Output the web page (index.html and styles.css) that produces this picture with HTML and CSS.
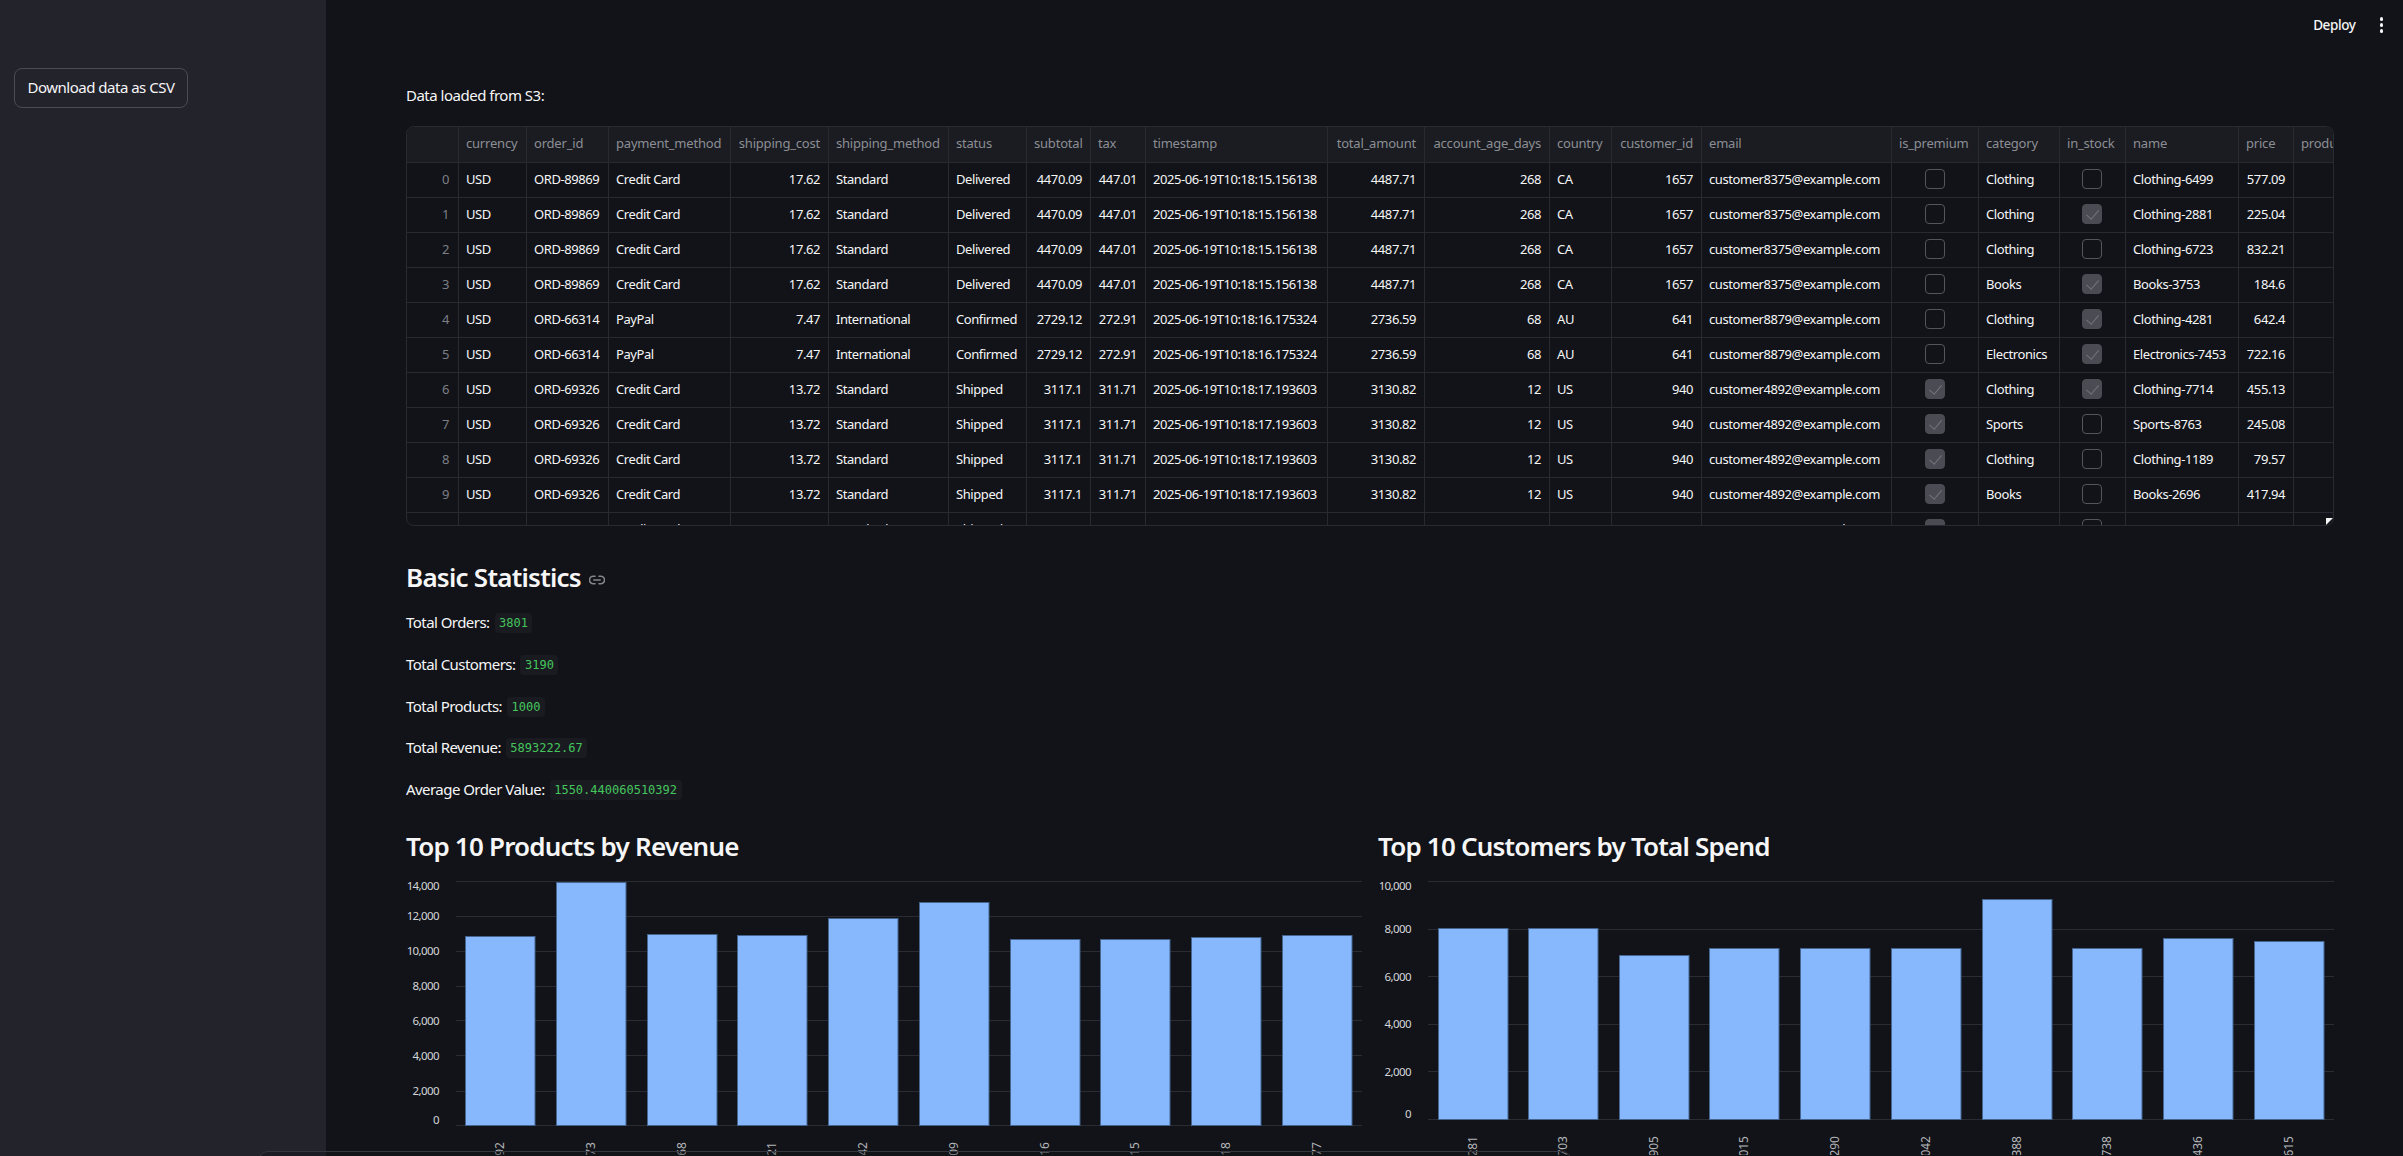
FILE: index.html
```html
<!DOCTYPE html>
<html lang="en">
<head>
  <meta charset="UTF-8" />
  <title>Data dashboard</title>
  <link rel="stylesheet" href="styles.css">
</head>
<body>
  <div class="app">
    <aside class="sidebar">
      <button class="download-btn">Download data as CSV</button>
    </aside>

    <main class="main">
      <div class="toolbar">
        <span class="deploy">Deploy</span>
        <span class="menu-dots"><i></i><i></i><i></i></span>
      </div>

      <p class="loaded">Data loaded from S3:</p>

      <div class="frame">
        <table class="grid">
          <colgroup>
            <col class="w52"><col class="w68"><col class="w82"><col class="w122"><col class="w98"><col class="w120"><col class="w78"><col class="w64"><col class="w55"><col class="w182"><col class="w97"><col class="w125"><col class="w62"><col class="w90"><col class="w190"><col class="w87"><col class="w81"><col class="w66"><col class="w113"><col class="w55"><col class="w120">
          </colgroup>
          <thead>
            <tr><th></th><th>currency</th><th>order_id</th><th>payment_method</th><th class="num">shipping_cost</th><th>shipping_method</th><th>status</th><th class="num">subtotal</th><th>tax</th><th>timestamp</th><th class="num">total_amount</th><th class="num">account_age_days</th><th>country</th><th class="num">customer_id</th><th>email</th><th>is_premium</th><th>category</th><th>in_stock</th><th>name</th><th>price</th><th>product_id</th></tr>
          </thead>
          <tbody>
            <tr><td class="idx">0</td><td>USD</td><td>ORD-89869</td><td>Credit Card</td><td class="num">17.62</td><td>Standard</td><td>Delivered</td><td class="num">4470.09</td><td class="num">447.01</td><td>2025-06-19T10:18:15.156138</td><td class="num">4487.71</td><td class="num">268</td><td>CA</td><td class="num">1657</td><td>customer8375@example.com</td><td><span class="box"></span></td><td>Clothing</td><td><span class="box"></span></td><td>Clothing-6499</td><td class="num">577.09</td><td></td></tr>
            <tr><td class="idx">1</td><td>USD</td><td>ORD-89869</td><td>Credit Card</td><td class="num">17.62</td><td>Standard</td><td>Delivered</td><td class="num">4470.09</td><td class="num">447.01</td><td>2025-06-19T10:18:15.156138</td><td class="num">4487.71</td><td class="num">268</td><td>CA</td><td class="num">1657</td><td>customer8375@example.com</td><td><span class="box"></span></td><td>Clothing</td><td><span class="box on"></span></td><td>Clothing-2881</td><td class="num">225.04</td><td></td></tr>
            <tr><td class="idx">2</td><td>USD</td><td>ORD-89869</td><td>Credit Card</td><td class="num">17.62</td><td>Standard</td><td>Delivered</td><td class="num">4470.09</td><td class="num">447.01</td><td>2025-06-19T10:18:15.156138</td><td class="num">4487.71</td><td class="num">268</td><td>CA</td><td class="num">1657</td><td>customer8375@example.com</td><td><span class="box"></span></td><td>Clothing</td><td><span class="box"></span></td><td>Clothing-6723</td><td class="num">832.21</td><td></td></tr>
            <tr><td class="idx">3</td><td>USD</td><td>ORD-89869</td><td>Credit Card</td><td class="num">17.62</td><td>Standard</td><td>Delivered</td><td class="num">4470.09</td><td class="num">447.01</td><td>2025-06-19T10:18:15.156138</td><td class="num">4487.71</td><td class="num">268</td><td>CA</td><td class="num">1657</td><td>customer8375@example.com</td><td><span class="box"></span></td><td>Books</td><td><span class="box on"></span></td><td>Books-3753</td><td class="num">184.6</td><td></td></tr>
            <tr><td class="idx">4</td><td>USD</td><td>ORD-66314</td><td>PayPal</td><td class="num">7.47</td><td>International</td><td>Confirmed</td><td class="num">2729.12</td><td class="num">272.91</td><td>2025-06-19T10:18:16.175324</td><td class="num">2736.59</td><td class="num">68</td><td>AU</td><td class="num">641</td><td>customer8879@example.com</td><td><span class="box"></span></td><td>Clothing</td><td><span class="box on"></span></td><td>Clothing-4281</td><td class="num">642.4</td><td></td></tr>
            <tr><td class="idx">5</td><td>USD</td><td>ORD-66314</td><td>PayPal</td><td class="num">7.47</td><td>International</td><td>Confirmed</td><td class="num">2729.12</td><td class="num">272.91</td><td>2025-06-19T10:18:16.175324</td><td class="num">2736.59</td><td class="num">68</td><td>AU</td><td class="num">641</td><td>customer8879@example.com</td><td><span class="box"></span></td><td>Electronics</td><td><span class="box on"></span></td><td>Electronics-7453</td><td class="num">722.16</td><td></td></tr>
            <tr><td class="idx">6</td><td>USD</td><td>ORD-69326</td><td>Credit Card</td><td class="num">13.72</td><td>Standard</td><td>Shipped</td><td class="num">3117.1</td><td class="num">311.71</td><td>2025-06-19T10:18:17.193603</td><td class="num">3130.82</td><td class="num">12</td><td>US</td><td class="num">940</td><td>customer4892@example.com</td><td><span class="box on"></span></td><td>Clothing</td><td><span class="box on"></span></td><td>Clothing-7714</td><td class="num">455.13</td><td></td></tr>
            <tr><td class="idx">7</td><td>USD</td><td>ORD-69326</td><td>Credit Card</td><td class="num">13.72</td><td>Standard</td><td>Shipped</td><td class="num">3117.1</td><td class="num">311.71</td><td>2025-06-19T10:18:17.193603</td><td class="num">3130.82</td><td class="num">12</td><td>US</td><td class="num">940</td><td>customer4892@example.com</td><td><span class="box on"></span></td><td>Sports</td><td><span class="box"></span></td><td>Sports-8763</td><td class="num">245.08</td><td></td></tr>
            <tr><td class="idx">8</td><td>USD</td><td>ORD-69326</td><td>Credit Card</td><td class="num">13.72</td><td>Standard</td><td>Shipped</td><td class="num">3117.1</td><td class="num">311.71</td><td>2025-06-19T10:18:17.193603</td><td class="num">3130.82</td><td class="num">12</td><td>US</td><td class="num">940</td><td>customer4892@example.com</td><td><span class="box on"></span></td><td>Clothing</td><td><span class="box"></span></td><td>Clothing-1189</td><td class="num">79.57</td><td></td></tr>
            <tr><td class="idx">9</td><td>USD</td><td>ORD-69326</td><td>Credit Card</td><td class="num">13.72</td><td>Standard</td><td>Shipped</td><td class="num">3117.1</td><td class="num">311.71</td><td>2025-06-19T10:18:17.193603</td><td class="num">3130.82</td><td class="num">12</td><td>US</td><td class="num">940</td><td>customer4892@example.com</td><td><span class="box on"></span></td><td>Books</td><td><span class="box"></span></td><td>Books-2696</td><td class="num">417.94</td><td></td></tr>
            <tr><td class="idx"></td><td>USD</td><td>ORD-44444</td><td>Credit Card</td><td></td><td>Standard</td><td>Shipped</td><td></td><td></td><td>2025-06-19T10:18:18.000000</td><td></td><td></td><td>US</td><td></td><td>customer1000@example.com</td><td><span class="box on"></span></td><td>Home</td><td><span class="box"></span></td><td>Home-1000</td><td></td><td></td></tr>
          </tbody>
        </table>
        <span class="resize-corner"></span>
      </div>

      <h3 class="section-title">Basic Statistics
        <svg class="anchor" width="16" height="10" viewBox="0 0 16 10" fill="none" stroke="#85868b" stroke-width="1.6" stroke-linecap="round"><path d="M6 1.2H4.3a3.8 3.8 0 0 0 0 7.6H6M10 1.2h1.7a3.8 3.8 0 0 1 0 7.6H10M4.8 5h6.4"/></svg>
      </h3>

      <div class="stats">
        <p>Total Orders: <code>3801</code></p>
        <p>Total Customers: <code>3190</code></p>
        <p>Total Products: <code>1000</code></p>
        <p>Total Revenue: <code>5893222.67</code></p>
        <p>Average Order Value: <code>1550.440060510392</code></p>
      </div>

      <div class="charts">
        <section>
          <h3 class="chart-title">Top 10 Products by Revenue</h3>
          <svg class="chart" width="956" height="281">
            <g class="gridlines">
              <line x1="50" x2="956" y1="7.5" y2="7.5"/><line x1="50" x2="956" y1="42.5" y2="42.5"/><line x1="50" x2="956" y1="77.5" y2="77.5"/><line x1="50" x2="956" y1="112.5" y2="112.5"/><line x1="50" x2="956" y1="146.5" y2="146.5"/><line x1="50" x2="956" y1="181.5" y2="181.5"/><line x1="50" x2="956" y1="217.5" y2="217.5"/><line x1="50" x2="956" y1="251.5" y2="251.5"/>
            </g>
            <g class="y-labels">
              <text x="33" y="16">14,000</text><text x="33" y="46">12,000</text><text x="33" y="81">10,000</text><text x="33" y="116">8,000</text><text x="33" y="151">6,000</text><text x="33" y="186">4,000</text><text x="33" y="221">2,000</text><text x="33" y="250">0</text>
            </g>
            <g class="bars">
              <rect x="59.5" y="62.5" width="69.5" height="189"/><rect x="150.5" y="8.5" width="69.5" height="243"/><rect x="241.5" y="60.5" width="69.5" height="191"/><rect x="331.5" y="61.5" width="69.5" height="190"/><rect x="422.5" y="44.5" width="69.5" height="207"/><rect x="513.5" y="28.5" width="69.5" height="223"/><rect x="604.5" y="65.5" width="69.5" height="186"/><rect x="694.5" y="65.5" width="69.5" height="186"/><rect x="785.5" y="63.5" width="69.5" height="188"/><rect x="876.5" y="61.5" width="69.5" height="190"/>
            </g>
            <g class="x-labels">
              <text transform="translate(98 268) rotate(-90)">6492</text><text transform="translate(189 268) rotate(-90)">3873</text><text transform="translate(280 268) rotate(-90)">1568</text><text transform="translate(370 268) rotate(-90)">7121</text><text transform="translate(461 268) rotate(-90)">2242</text><text transform="translate(552 268) rotate(-90)">9409</text><text transform="translate(643 268) rotate(-90)">5116</text><text transform="translate(733 268) rotate(-90)">8015</text><text transform="translate(824 268) rotate(-90)">4318</text><text transform="translate(915 268) rotate(-90)">6677</text>
            </g>
          </svg>
        </section>
        <section>
          <h3 class="chart-title">Top 10 Customers by Total Spend</h3>
          <svg class="chart" width="956" height="281">
            <g class="gridlines">
              <line x1="50" x2="956" y1="7.5" y2="7.5"/><line x1="50" x2="956" y1="55.5" y2="55.5"/><line x1="50" x2="956" y1="102.5" y2="102.5"/><line x1="50" x2="956" y1="150.5" y2="150.5"/><line x1="50" x2="956" y1="197.5" y2="197.5"/><line x1="50" x2="956" y1="245.5" y2="245.5"/>
            </g>
            <g class="y-labels">
              <text x="33" y="16">10,000</text><text x="33" y="59">8,000</text><text x="33" y="107">6,000</text><text x="33" y="154">4,000</text><text x="33" y="202">2,000</text><text x="33" y="244">0</text>
            </g>
            <g class="bars">
              <rect x="60.5" y="54.5" width="69.5" height="191"/><rect x="150.5" y="54.5" width="69.5" height="191"/><rect x="241.5" y="81.5" width="69.5" height="164"/><rect x="331.5" y="74.5" width="69.5" height="171"/><rect x="422.5" y="74.5" width="69.5" height="171"/><rect x="513.5" y="74.5" width="69.5" height="171"/><rect x="604.5" y="25.5" width="69.5" height="220"/><rect x="694.5" y="74.5" width="69.5" height="171"/><rect x="785.5" y="64.5" width="69.5" height="181"/><rect x="876.5" y="67.5" width="69.5" height="178"/>
            </g>
            <g class="x-labels">
              <text transform="translate(99 262) rotate(-90)">1281</text><text transform="translate(189 262) rotate(-90)">2703</text><text transform="translate(280 262) rotate(-90)">1905</text><text transform="translate(370 262) rotate(-90)">2015</text><text transform="translate(461 262) rotate(-90)">1290</text><text transform="translate(552 262) rotate(-90)">3042</text><text transform="translate(643 262) rotate(-90)">4388</text><text transform="translate(733 262) rotate(-90)">4738</text><text transform="translate(824 262) rotate(-90)">6436</text><text transform="translate(915 262) rotate(-90)">4615</text>
            </g>
          </svg>
        </section>
      </div>
    </main>
  </div>

  <div class="bottom-edge"></div>
</body>
</html>
```

FILE: styles.css
```css
:root {
  --bg: #111318;
  --bg-side: #23232c;
  --bg-head: #1a1c22;
  --line: #282a31;
  --txt: #f6f6f7;
  --txt-dim: #8c8e94;
  --font: "Noto Sans", sans-serif;
}

* {
  box-sizing: border-box;
}

body {
  margin: 0;
  height: 100vh;
  overflow: hidden;
  background: var(--bg);
  color: var(--txt);
  font-family: var(--font);
}

.app {
  display: flex;
  height: 100vh;
  overflow: hidden;
}

.sidebar {
  flex: 0 0 326px;
  background: var(--bg-side);
  padding: 68px 14px 0;
}

.download-btn {
  display: block;
  width: 174px;
  height: 40px;
  padding: 0 0 2px;
  background: transparent;
  color: var(--txt);
  border: 1px solid #4a4b54;
  border-radius: 8px;
  font-family: var(--font);
  font-size: 15px;
  font-weight: 450;
  letter-spacing: -0.5px;
}

.main {
  flex: 1;
  min-width: 0;
  padding: 0 69px 0 80px;
}

.toolbar {
  display: flex;
  justify-content: flex-end;
  align-items: center;
  gap: 24px;
  height: 50px;
  margin-right: -49px;
}

.deploy {
  font-size: 13.5px;
  font-weight: 500;
  letter-spacing: -0.4px;
}

.menu-dots {
  display: flex;
  flex-direction: column;
  gap: 2.5px;
}

.menu-dots i {
  display: block;
  width: 3.5px;
  height: 3.5px;
  border-radius: 50%;
  background: var(--txt);
}

.loaded {
  margin: 33px 0 19px;
  font-size: 15px;
  font-weight: 450;
  line-height: 24px;
  letter-spacing: -0.5px;
}

/* table */
.frame {
  position: relative;
  width: 1928px;
  height: 400px;
  overflow: hidden;
  border: 1px solid var(--line);
  border-radius: 8px;
}

.grid {
  width: 2007px;
  table-layout: fixed;
  border-collapse: separate;
  border-spacing: 0;
  font-size: 13px;
  letter-spacing: -0.42px;
}

.w52 { width: 52px; }
.w55 { width: 55px; }
.w62 { width: 62px; }
.w64 { width: 64px; }
.w66 { width: 66px; }
.w68 { width: 68px; }
.w78 { width: 78px; }
.w81 { width: 81px; }
.w82 { width: 82px; }
.w87 { width: 87px; }
.w90 { width: 90px; }
.w97 { width: 97px; }
.w98 { width: 98px; }
.w113 { width: 113px; }
.w120 { width: 120px; }
.w122 { width: 122px; }
.w125 { width: 125px; }
.w182 { width: 182px; }
.w190 { width: 190px; }

.grid th,
.grid td {
  padding: 0 8px 3px 7px;
  border-right: 1px solid var(--line);
  border-bottom: 1px solid var(--line);
  white-space: nowrap;
  overflow: hidden;
  text-align: left;
}

.grid th {
  height: 36px;
  background: var(--bg-head);
  color: var(--txt-dim);
  font-weight: 400;
  letter-spacing: -0.2px;
}

.grid td {
  height: 35px;
  font-weight: 450;
}

.grid th.num,
.grid td.num {
  text-align: right;
}

.grid td.idx {
  padding-right: 9px;
  text-align: right;
  color: #7d7f85;
}

.box {
  position: relative;
  display: block;
  width: 20px;
  height: 20px;
  margin: 0 auto;
  border: 1px solid #54555b;
  border-radius: 4px;
}

.box.on {
  background: #4b4c53;
  border-color: #4b4c53;
}

.box.on::after {
  content: "";
  position: absolute;
  left: 6px;
  top: 2px;
  width: 6px;
  height: 11px;
  border-right: 1.5px solid #74757b;
  border-bottom: 1.5px solid #74757b;
  transform: rotate(40deg);
}

.resize-corner {
  position: absolute;
  right: 0;
  bottom: 0;
  width: 7px;
  height: 7px;
  background: #f4f4f4;
  clip-path: polygon(0 0, 100% 0, 0 100%);
}

/* headings + stats */
.section-title {
  display: flex;
  align-items: center;
  gap: 8px;
  margin: 31px 0 0;
  font-size: 26px;
  line-height: 40px;
  font-weight: 600;
  letter-spacing: -0.75px;
}

.anchor {
  margin-top: 6px;
}

.stats {
  margin-top: 13px;
}

.stats p {
  display: flex;
  align-items: center;
  gap: 5px;
  height: 24px;
  margin: 0 0 17.75px;
  font-size: 15px;
  font-weight: 450;
  letter-spacing: -0.55px;
}

.stats code {
  height: 20px;
  padding: 0 4.5px;
  margin-top: 2px;
  background: #191b21;
  border-radius: 4px;
  color: #45c65c;
  font-family: "DejaVu Sans Mono", monospace;
  font-size: 12px;
  line-height: 20px;
  letter-spacing: 0;
}

.charts {
  display: grid;
  grid-template-columns: 1fr 1fr;
  gap: 16px;
  margin-top: 25px;
}

.chart-title {
  margin: 0 0 8px;
  font-size: 26px;
  line-height: 40px;
  font-weight: 600;
  letter-spacing: -0.8px;
}

.chart {
  display: block;
}

.gridlines line {
  stroke: #2a2c33;
  stroke-width: 1;
}

.bars rect {
  fill: #87b8fd;
  stroke: #45658f;
  stroke-width: 1;
}

.y-labels text {
  fill: #d4d5d8;
  font-size: 11.5px;
  letter-spacing: -0.6px;
  text-anchor: end;
}

.x-labels text {
  fill: #b4b5b9;
  font-size: 12px;
  text-anchor: end;
}

.bottom-edge {
  position: fixed;
  left: 258px;
  bottom: -6px;
  width: 1314px;
  height: 11px;
  border: 1px solid #36373e;
  border-radius: 10px 10px 0 0;
  background: rgba(17, 19, 24, 0.35);
}
```
